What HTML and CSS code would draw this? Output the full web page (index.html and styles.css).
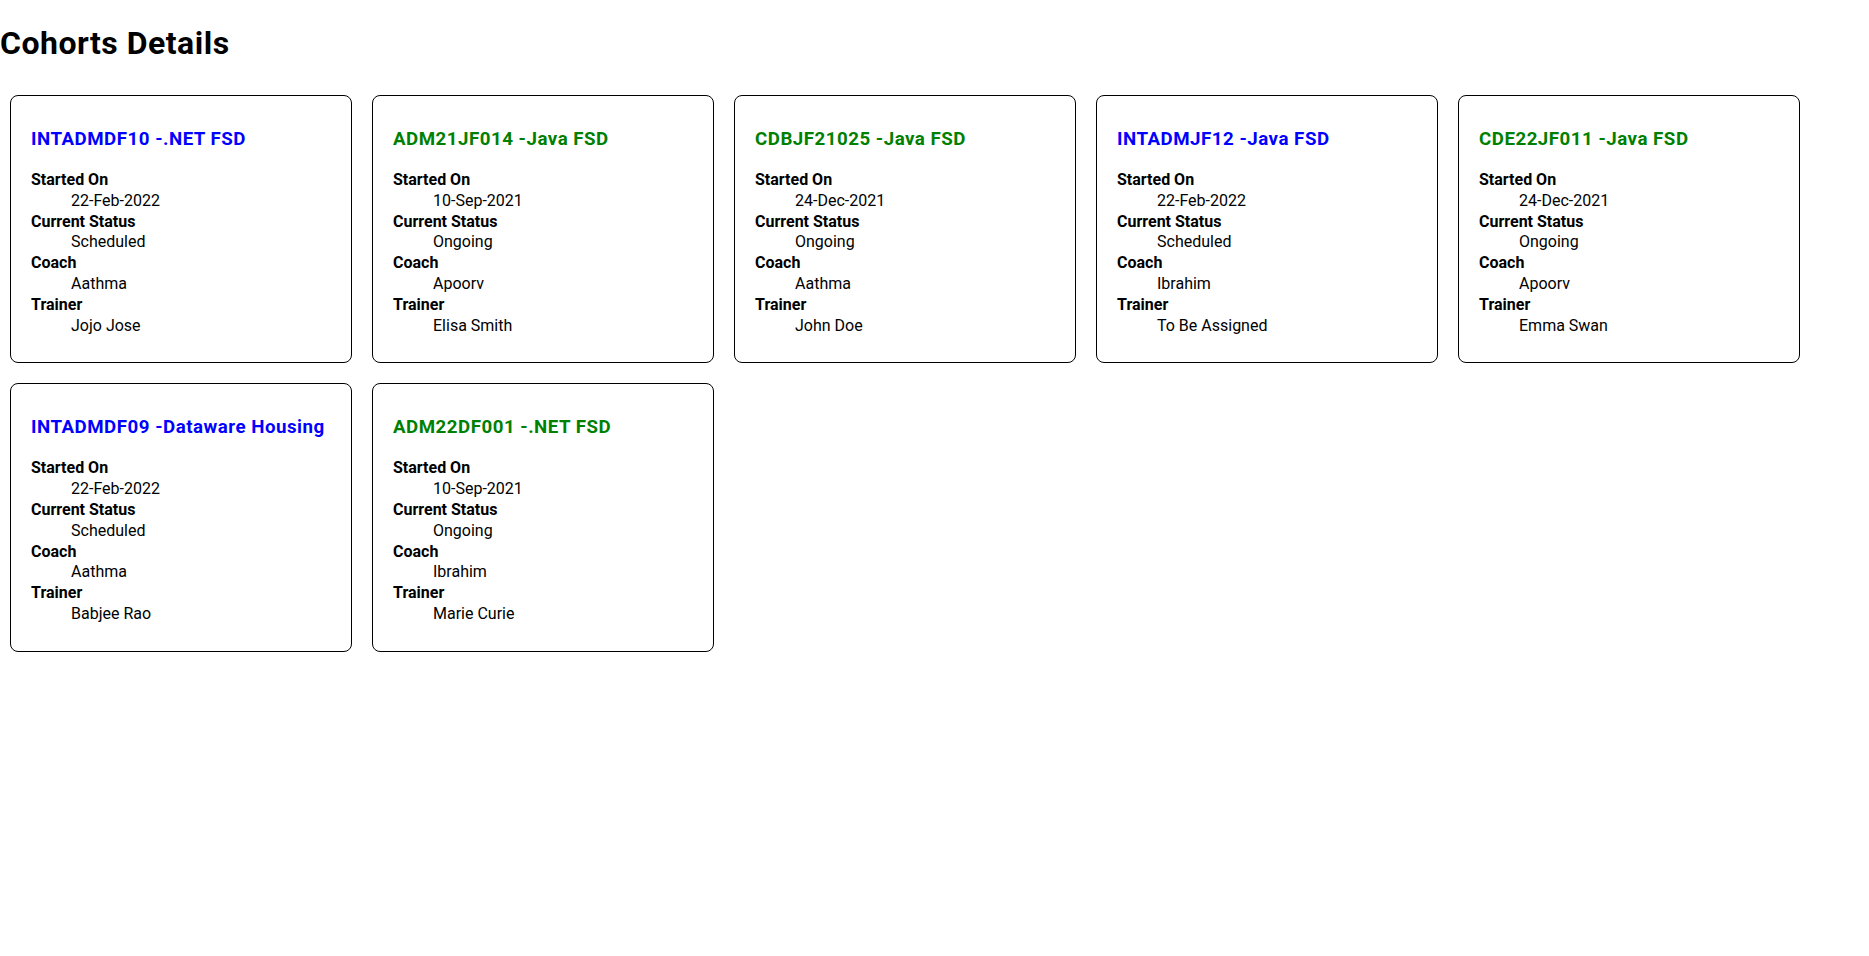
FILE: index.html
```html
<!DOCTYPE html>
<html lang="en">
<head>
<meta charset="utf-8">
<title>Cohorts Details</title>
<link rel="stylesheet" href="styles.css">
</head>
<body>
<h1 class="page-title">Cohorts Details</h1>
<div class="cohorts">
  <div class="card">
    <h3 class="card-title scheduled">INTADMDF10 -.NET FSD</h3>
    <dl class="details">
      <dt>Started On</dt><dd>22-Feb-2022</dd>
      <dt>Current Status</dt><dd>Scheduled</dd>
      <dt>Coach</dt><dd>Aathma</dd>
      <dt>Trainer</dt><dd>Jojo Jose</dd>
    </dl>
  </div>
  <div class="card">
    <h3 class="card-title ongoing">ADM21JF014 -Java FSD</h3>
    <dl class="details">
      <dt>Started On</dt><dd>10-Sep-2021</dd>
      <dt>Current Status</dt><dd>Ongoing</dd>
      <dt>Coach</dt><dd>Apoorv</dd>
      <dt>Trainer</dt><dd>Elisa Smith</dd>
    </dl>
  </div>
  <div class="card">
    <h3 class="card-title ongoing">CDBJF21025 -Java FSD</h3>
    <dl class="details">
      <dt>Started On</dt><dd>24-Dec-2021</dd>
      <dt>Current Status</dt><dd>Ongoing</dd>
      <dt>Coach</dt><dd>Aathma</dd>
      <dt>Trainer</dt><dd>John Doe</dd>
    </dl>
  </div>
  <div class="card">
    <h3 class="card-title scheduled">INTADMJF12 -Java FSD</h3>
    <dl class="details">
      <dt>Started On</dt><dd>22-Feb-2022</dd>
      <dt>Current Status</dt><dd>Scheduled</dd>
      <dt>Coach</dt><dd>Ibrahim</dd>
      <dt>Trainer</dt><dd>To Be Assigned</dd>
    </dl>
  </div>
  <div class="card">
    <h3 class="card-title ongoing">CDE22JF011 -Java FSD</h3>
    <dl class="details">
      <dt>Started On</dt><dd>24-Dec-2021</dd>
      <dt>Current Status</dt><dd>Ongoing</dd>
      <dt>Coach</dt><dd>Apoorv</dd>
      <dt>Trainer</dt><dd>Emma Swan</dd>
    </dl>
  </div>
  <div class="card">
    <h3 class="card-title scheduled">INTADMDF09 -Dataware Housing</h3>
    <dl class="details">
      <dt>Started On</dt><dd>22-Feb-2022</dd>
      <dt>Current Status</dt><dd>Scheduled</dd>
      <dt>Coach</dt><dd>Aathma</dd>
      <dt>Trainer</dt><dd>Babjee Rao</dd>
    </dl>
  </div>
  <div class="card">
    <h3 class="card-title ongoing">ADM22DF001 -.NET FSD</h3>
    <dl class="details">
      <dt>Started On</dt><dd>10-Sep-2021</dd>
      <dt>Current Status</dt><dd>Ongoing</dd>
      <dt>Coach</dt><dd>Ibrahim</dd>
      <dt>Trainer</dt><dd>Marie Curie</dd>
    </dl>
  </div>
</div>
</body>
</html>
```
FILE: styles.css
```css
html, body {
  background: #ffffff;
}
body {
  margin: 0;
  font-family: Roboto, "Liberation Sans", Arial, sans-serif;
  font-size: 16px;
  color: #000000;
}
.page-title {
  font-size: 32px;
  font-weight: 700;
  line-height: 44px;
  letter-spacing: 0.5px;
  margin: 21px 0 20px 0;
}
.cohorts {
  display: flex;
  flex-wrap: wrap;
  align-items: flex-start;
}
.card {
  width: 300px;
  margin: 10px;
  padding: 10px 20px;
  border: 1px solid #000000;
  border-radius: 8px;
}
.card-title {
  font-size: 18.72px;
  font-weight: 700;
  line-height: 24px;
  letter-spacing: 0.5px;
  margin: 21px 0 19px 0;
}
.card-title.scheduled {
  color: #0000ff;
}
.card-title.ongoing {
  color: #008000;
}
.details {
  margin: 0 0 16px 0;
  line-height: 20.8px;
}
.details dt {
  font-weight: 700;
}
.details dd {
  margin-left: 40px;
}
```
